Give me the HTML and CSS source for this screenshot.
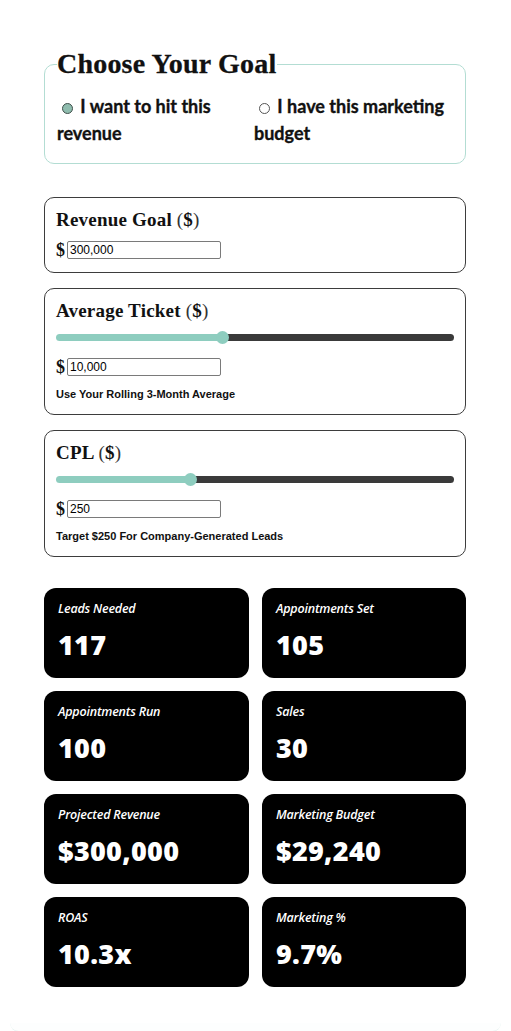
FILE: index.html
```html
<!DOCTYPE html>
<html lang="en">
<head>
<meta charset="utf-8">
<title>Marketing Budget Calculator</title>
<link rel="stylesheet" href="styles.css">
</head>
<body>
<main class="page">
  <fieldset class="goal">
    <legend class="goal-legend">Choose Your Goal</legend>
    <div class="goal-options">
      <label class="goal-option"><input class="goal-radio" type="radio" name="goal" checked> I want to hit this revenue</label>
      <label class="goal-option"><input class="goal-radio" type="radio" name="goal"> I have this marketing budget</label>
    </div>
  </fieldset>

  <section class="inputs">
    <div class="field-card">
      <h3 class="field-title">Revenue Goal <span class="paren">(</span>$<span class="paren">)</span></h3>
      <div class="money"><span class="money-sign">$</span><input class="money-input" type="text" value="300,000"></div>
    </div>

    <div class="field-card">
      <h3 class="field-title">Average Ticket <span class="paren">(</span>$<span class="paren">)</span></h3>
      <input class="slider" type="range" min="0" max="24000" value="10000" style="--fill:41.9%">
      <div class="money"><span class="money-sign">$</span><input class="money-input" type="text" value="10,000"></div>
      <p class="field-hint">Use Your Rolling 3-Month Average</p>
    </div>

    <div class="field-card">
      <h3 class="field-title">CPL <span class="paren">(</span>$<span class="paren">)</span></h3>
      <input class="slider" type="range" min="0" max="750" value="250" style="--fill:34%">
      <div class="money"><span class="money-sign">$</span><input class="money-input" type="text" value="250"></div>
      <p class="field-hint">Target $250 For Company-Generated Leads</p>
    </div>
  </section>

  <section class="stats">
    <div class="stat"><div class="stat-label">Leads Needed</div><div class="stat-value">117</div></div>
    <div class="stat"><div class="stat-label">Appointments Set</div><div class="stat-value">105</div></div>
    <div class="stat"><div class="stat-label">Appointments Run</div><div class="stat-value">100</div></div>
    <div class="stat"><div class="stat-label">Sales</div><div class="stat-value">30</div></div>
    <div class="stat"><div class="stat-label">Projected Revenue</div><div class="stat-value">$300,000</div></div>
    <div class="stat"><div class="stat-label">Marketing Budget</div><div class="stat-value">$29,240</div></div>
    <div class="stat"><div class="stat-label">ROAS</div><div class="stat-value">10.3x</div></div>
    <div class="stat"><div class="stat-label">Marketing %</div><div class="stat-value">9.7%</div></div>
  </section>
</main>
<div class="page-edge"></div>
</body>
</html>
```
FILE: styles.css
```css
* { box-sizing: border-box; }

html, body {
  margin: 0;
  padding: 0;
  background: #fff;
}

body {
  font-family: "Liberation Sans", Arial, sans-serif;
  color: #111;
}

.page {
  width: 422px;
  margin-left: 44px;
  padding-top: 47px;
}

/* Goal fieldset */
.goal {
  margin: 0;
  border: 1px solid #b3ddd3;
  border-radius: 10px;
  padding: 0 12px 16px;
}

.goal-legend {
  padding: 0 1px 0 0;
  font-family: "Liberation Serif", "Times New Roman", serif;
  font-weight: 700;
  font-size: 28px;
  line-height: 34px;
  color: #111;
  letter-spacing: 0.2px;
  -webkit-text-stroke: 0.3px #111;
}

.goal-options {
  display: grid;
  grid-template-columns: 197px 1fr;
  padding-top: 12px;
}

.goal-option {
  font-family: Lato, "Open Sans", sans-serif;
  font-weight: 700;
  font-size: 18px;
  line-height: 27px;
  color: #111;
  -webkit-text-stroke: 0.35px #111;
}

.goal-radio {
  appearance: none;
  -webkit-appearance: none;
  width: 11px;
  height: 11px;
  margin: 0 3px 0 5px;
  border: 1px solid #555;
  border-radius: 50%;
  background: #fff;
  vertical-align: -0.5px;
}

.goal-radio:checked {
  background: #8fbcae;
  border-color: #3f4f4a;
}

/* Input cards */
.inputs {
  display: flex;
  flex-direction: column;
  gap: 15px;
  margin-top: 33px;
}

.field-card {
  border: 1px solid #3d3d3d;
  border-radius: 10px;
  padding: 9px 11px 13px;
  display: flex;
  flex-direction: column;
}

.field-title {
  margin: 0;
  font-family: "Liberation Serif", "Times New Roman", serif;
  font-weight: 700;
  font-size: 19px;
  line-height: 26px;
  color: #111;
  letter-spacing: 0.2px;
}

.paren {
  font-weight: 400;
  color: #333;
}

.slider {
  -webkit-appearance: none;
  appearance: none;
  width: 100%;
  height: 7px;
  margin: 10px 0 17px;
  border-radius: 4px;
  background: linear-gradient(to right, #8ecdbf 0, #8ecdbf var(--fill), #3a3a3a var(--fill), #3a3a3a 100%);
  outline: none;
}

.slider::-webkit-slider-thumb {
  -webkit-appearance: none;
  appearance: none;
  width: 13px;
  height: 13px;
  border-radius: 50%;
  background: #8ecdbf;
  border: none;
}

.money {
  display: flex;
  align-items: center;
  gap: 2px;
  margin-top: 8px;
}

.slider + .money {
  margin-top: 0;
}

.money-sign {
  font-family: "Liberation Serif", "Times New Roman", serif;
  font-weight: 700;
  font-size: 18px;
  line-height: 18px;
  color: #111;
}

.money-input {
  width: 154px;
  height: 18px;
  margin: 0;
  padding: 0 2px;
  border: 1px solid #7a7a7a;
  border-radius: 2px;
  font-family: "Liberation Sans", Arial, sans-serif;
  font-size: 12px;
  color: #000;
  background: #fff;
}

.field-hint {
  margin: 11px 0 0;
  font-family: "Liberation Sans", Arial, sans-serif;
  font-weight: 700;
  font-size: 11px;
  line-height: 14px;
  color: #111;
}

/* Stats */
.stats {
  display: grid;
  grid-template-columns: 205px 204px;
  gap: 13px;
  margin-top: 31px;
}

.stat {
  background: #000;
  color: #fff;
  border-radius: 12px;
  height: 90px;
  padding: 13px 14px;
}

.stat-label {
  font-family: "Open Sans", "Noto Sans", sans-serif;
  font-style: italic;
  font-weight: 600;
  font-size: 12.5px;
  line-height: 16px;
  letter-spacing: -0.2px;
}

.stat-value {
  margin-top: 11px;
  font-family: "Open Sans", "Noto Sans", sans-serif;
  font-weight: 800;
  font-size: 27px;
  line-height: 34px;
  letter-spacing: 0.3px;
}

.page-edge {
  margin: 36px 10px 0;
  height: 9px;
  border-radius: 0 0 12px 12px;
  border-bottom: 1px solid #e4f2ef;
  background: #fdfefe;
}
```
